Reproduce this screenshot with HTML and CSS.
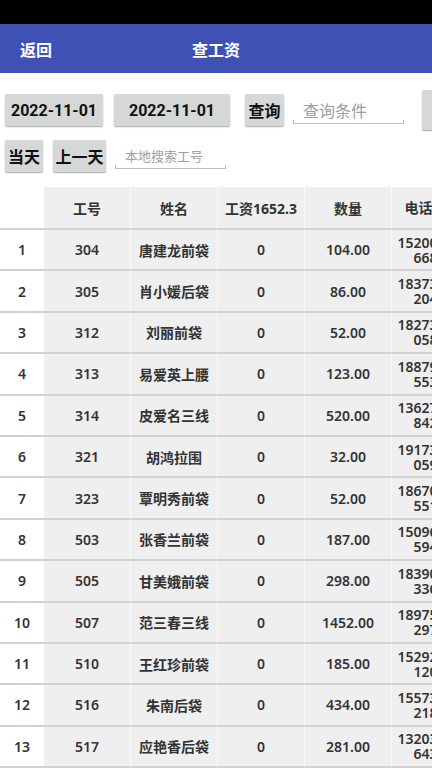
FILE: index.html
```html
<!DOCTYPE html>
<html>
<head>
<meta charset="utf-8">
<link rel="stylesheet" href="styles.css">
</head>
<body>
<div class="screen">
  <div class="statusbar"></div>
  <div class="appbar">
    <span class="back">返回</span>
    <span class="title">查工资</span>
  </div>
  <div class="toolbar row1">
    <div class="btn date1">2022-11-01</div>
    <div class="btn date2">2022-11-01</div>
    <div class="btn query">查询</div>
    <div class="field field1"><span class="ph">查询条件</span></div>
    <div class="btn extra"></div>
  </div>
  <div class="toolbar row2">
    <div class="btn today">当天</div>
    <div class="btn prev">上一天</div>
    <div class="field field2"><span class="ph small">本地搜索工号</span></div>
  </div>
  <div class="table">
    <div class="tr head">
      <div class="td idx"></div>
      <div class="td">工号</div>
      <div class="td">姓名</div>
      <div class="td">工资1652.3</div>
      <div class="td">数量</div>
      <div class="td phone">电话号码</div>
    </div>
    <div class="tr"><div class="td idx">1</div><div class="td">304</div><div class="td">唐建龙前袋</div><div class="td">0</div><div class="td">104.00</div><div class="td phone"><span class="l1">15200618352</span><span class="l2">6681234</span></div></div>
    <div class="tr"><div class="td idx">2</div><div class="td">305</div><div class="td">肖小媛后袋</div><div class="td">0</div><div class="td">86.00</div><div class="td phone"><span class="l1">18373152683</span><span class="l2">2041234</span></div></div>
    <div class="tr"><div class="td idx">3</div><div class="td">312</div><div class="td">刘丽前袋</div><div class="td">0</div><div class="td">52.00</div><div class="td phone"><span class="l1">18273069144</span><span class="l2">0581234</span></div></div>
    <div class="tr"><div class="td idx">4</div><div class="td">313</div><div class="td">易爱英上腰</div><div class="td">0</div><div class="td">123.00</div><div class="td phone"><span class="l1">18879255071</span><span class="l2">5531234</span></div></div>
    <div class="tr"><div class="td idx">5</div><div class="td">314</div><div class="td">皮爱名三线</div><div class="td">0</div><div class="td">520.00</div><div class="td phone"><span class="l1">13627188429</span><span class="l2">8421234</span></div></div>
    <div class="tr"><div class="td idx">6</div><div class="td">321</div><div class="td">胡鸿拉围</div><div class="td">0</div><div class="td">32.00</div><div class="td phone"><span class="l1">19173605316</span><span class="l2">0591234</span></div></div>
    <div class="tr"><div class="td idx">7</div><div class="td">323</div><div class="td">覃明秀前袋</div><div class="td">0</div><div class="td">52.00</div><div class="td phone"><span class="l1">18670422570</span><span class="l2">5511234</span></div></div>
    <div class="tr"><div class="td idx">8</div><div class="td">503</div><div class="td">张香兰前袋</div><div class="td">0</div><div class="td">187.00</div><div class="td phone"><span class="l1">15096377193</span><span class="l2">5941234</span></div></div>
    <div class="tr"><div class="td idx">9</div><div class="td">505</div><div class="td">甘美娥前袋</div><div class="td">0</div><div class="td">298.00</div><div class="td phone"><span class="l1">18390144638</span><span class="l2">3361234</span></div></div>
    <div class="tr"><div class="td idx">10</div><div class="td">507</div><div class="td">范三春三线</div><div class="td">0</div><div class="td">1452.00</div><div class="td phone"><span class="l1">18975028712</span><span class="l2">2971234</span></div></div>
    <div class="tr"><div class="td idx">11</div><div class="td">510</div><div class="td">王红珍前袋</div><div class="td">0</div><div class="td">185.00</div><div class="td phone"><span class="l1">15292683045</span><span class="l2">1201234</span></div></div>
    <div class="tr"><div class="td idx">12</div><div class="td">516</div><div class="td">朱南后袋</div><div class="td">0</div><div class="td">434.00</div><div class="td phone"><span class="l1">15573711966</span><span class="l2">2181234</span></div></div>
    <div class="tr"><div class="td idx">13</div><div class="td">517</div><div class="td">应艳香后袋</div><div class="td">0</div><div class="td">281.00</div><div class="td phone"><span class="l1">13203455207</span><span class="l2">6431234</span></div></div>
  </div>
</div>
</body>
</html>
```
FILE: styles.css
```css
* { box-sizing: border-box; }
html, body {
  margin: 0;
  padding: 0;
  background: #ffffff;
  overflow: hidden;
}
.screen {
  width: 432px;
  height: 768px;
  overflow: hidden;
  font-family: "Noto Sans", "Noto Sans CJK SC", sans-serif;
  color: #333333;
}
.statusbar {
  height: 24px;
  background: #000000;
}
.appbar {
  height: 49px;
  background: #3f51b5;
  display: flex;
  align-items: center;
  position: relative;
  color: #ffffff;
  font-size: 16px;
  font-weight: 700;
  font-family: "Noto Sans CJK SC", sans-serif;
}
.back {
  padding-left: 20px;
}
.title {
  position: absolute;
  left: 0;
  right: 0;
  text-align: center;
  pointer-events: none;
}
.toolbar {
  display: flex;
  align-items: center;
  padding-left: 5px;
  white-space: nowrap;
}
.row1 {
  margin-top: 17px;
  height: 40px;
}
.row2 {
  margin-top: 10px;
  height: 32px;
}
.btn {
  height: 32px;
  background: #d6d7d7;
  border-radius: 2px;
  box-shadow: 0 1px 1.5px rgba(0, 0, 0, 0.35);
  display: flex;
  align-items: center;
  justify-content: center;
  color: #111111;
  font-size: 16px;
  font-weight: 700;
  font-family: "Roboto", "Noto Sans CJK SC", sans-serif;
  flex: none;
}
.date1 { width: 98px; }
.date2 { width: 116px; margin-left: 11px; }
.query { width: 39px; margin-left: 15px; }
.extra { width: 20px; height: 40px; margin-left: 18px; }
.today { width: 38px; }
.prev { width: 53px; margin-left: 10px; }
.field {
  position: relative;
  width: 111px;
  border-bottom: 1px solid #bdbdbd;
  display: flex;
  align-items: center;
  padding-left: 10px;
  flex: none;
}
.field::before, .field::after {
  content: "";
  position: absolute;
  bottom: -1px;
  width: 1px;
  height: 4px;
  background: #bdbdbd;
}
.field::before { left: 0; }
.field::after { right: 0; }
.field1 { margin-left: 9px; height: 27px; }
.field2 { margin-left: 9px; height: 26px; }
.ph {
  color: #9e9e9e;
  font-size: 16px;
  font-family: "Noto Sans CJK SC", sans-serif;
}
.ph.small { font-size: 13px; }
.table {
  margin-top: 15px;
  width: 540px;
}
.tr {
  display: flex;
  height: 41.4px;
  border-bottom: 2px solid #d2d2d2;
}
.tr.head {
  height: 43px;
}
.td {
  width: 87px;
  flex: none;
  background: #efefef;
  border-right: 1px solid #fafafa;
  display: flex;
  align-items: center;
  justify-content: center;
  text-align: center;
  font-size: 14px;
  font-weight: 600;
  color: #333333;
}
.head .td { font-weight: 700; }
.td.idx {
  width: 44px;
  background: #ffffff;
  border-right: none;
}
.td.phone {
  width: 100px;
  flex-direction: column;
  line-height: 15px;
}
.head .td.phone {
  padding-right: 18px;
}
.l1, .l2 {
  display: block;
  white-space: nowrap;
}
```
